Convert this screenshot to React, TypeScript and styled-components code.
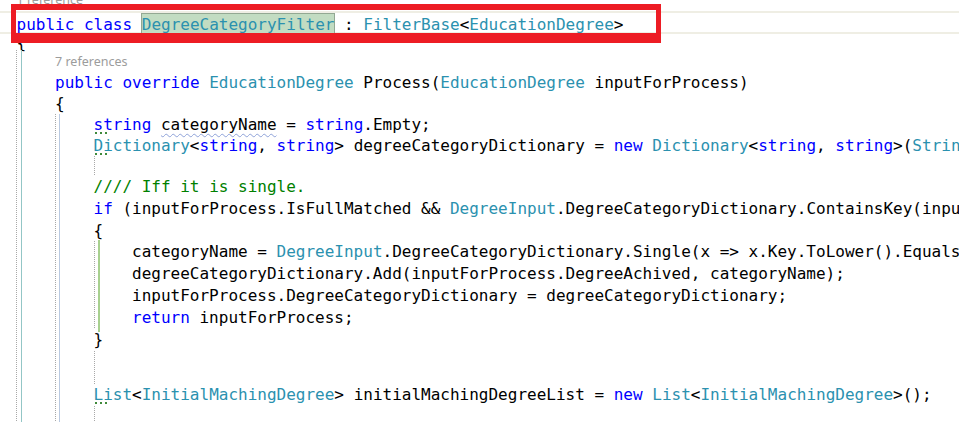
import React from 'react';
import styled, { createGlobalStyle, css } from 'styled-components';

const GlobalStyle = createGlobalStyle`
  html, body {
    margin: 0;
    padding: 0;
    background: #ffffff;
  }
  body {
    width: 959px;
    height: 422px;
    overflow: hidden;
  }
`;

const CHAR = 9.63;
const INDENT = CHAR * 4;
const GUTTER = 16.5;

type Kind = 'kw' | 'type' | 'comment' | 'plain' | 'symbol' | 'hint' | 'squiggle';
type Seg = [Kind, string];

type Line =
  | { lens: string; h: number; indent: number }
  | { segs: Seg[]; h: number; indent: number; current?: boolean };

const Editor = styled.div`
  position: relative;
  width: 959px;
  height: 422px;
  overflow: hidden;
  background: #ffffff;
`;

// editor is scrolled a little: the first code lens sits above the top edge
const Lines = styled.div`
  display: flex;
  flex-direction: column;
  margin-top: -12px;
`;

const CodeLine = styled.div<{ $h: number; $indent: number; $current?: boolean }>`
  flex-shrink: 0;
  box-sizing: border-box;
  height: ${({ $h }) => $h}px;
  line-height: ${({ $h, $current }) => ($current ? $h - 4 : $h)}px;
  padding-left: ${({ $indent }) => GUTTER + $indent * INDENT}px;
  font-family: 'DejaVu Sans Mono', 'Liberation Mono', monospace;
  font-size: 16px;
  color: #000000;
  white-space: pre;
  ${({ $current }) =>
    $current &&
    css`
      border-top: 2px solid #efeee4;
      border-bottom: 2px solid #efeee4;
    `}
`;

const LensLine = styled.div<{ $h: number; $indent: number }>`
  flex-shrink: 0;
  height: ${({ $h }) => $h}px;
  line-height: ${({ $h }) => $h}px;
  padding-left: ${({ $indent }) => GUTTER + $indent * INDENT}px;
  font-family: 'Noto Sans', 'Open Sans', sans-serif;
  font-size: 12.5px;
  color: #9c9c9c;
  white-space: pre;
`;

const colors: Record<string, string> = {
  kw: '#0000ff',
  type: '#2b91af',
  comment: '#008000',
  plain: '#000000',
};

const Tok = styled.span<{ $kind: string }>`
  color: ${({ $kind }) => colors[$kind] || '#000000'};
`;

const Symbol = styled.span`
  display: inline-block;
  line-height: 21px;
  margin: 0 -1px;
  border: 1px solid #93a893;
  background: #c2dcc2;
  color: #2b91af;
`;

const Hint = styled.span<{ $kind: string }>`
  position: relative;
  color: ${({ $kind }) => colors[$kind]};
  &::after {
    content: '';
    position: absolute;
    left: 1px;
    bottom: 0;
    width: 15px;
    height: 2px;
    background: repeating-linear-gradient(to right, #3f8a3a 0 2px, transparent 2px 5px);
  }
`;

const Squiggle = styled.span`
  text-decoration: underline wavy #8ea2d8;
  text-decoration-thickness: 1px;
  text-underline-offset: 3px;
`;

const Guide = styled.div<{ $x: number; $top: number; $height: number; $tone: 'dot' | 'teal' | 'blue' | 'green' }>`
  position: absolute;
  left: ${({ $x }) => $x}px;
  top: ${({ $top }) => $top}px;
  height: ${({ $height }) => $height}px;
  width: ${({ $tone }) => ($tone === 'green' ? 2 : 1)}px;
  pointer-events: none;
  background: ${({ $tone }) => {
    if ($tone === 'dot') return 'repeating-linear-gradient(to bottom, #a8a8a8 0 1px, transparent 1px 2px)';
    if ($tone === 'teal') return '#93c6c6';
    if ($tone === 'blue') return '#b9c9e0';
    return '#a7d08f';
  }};
`;

const RedFrame = styled.div`
  position: absolute;
  left: 11px;
  top: 4px;
  width: 650px;
  height: 39px;
  box-sizing: border-box;
  border-style: solid;
  border-color: #ed1c24;
  border-width: 6px 5px 10px 5px;
  pointer-events: none;
`;

const lines: Line[] = [
  { lens: '1 reference', h: 23, indent: 0 },
  {
    h: 23,
    indent: 0,
    current: true,
    segs: [
      ['kw', 'public'],
      ['plain', ' '],
      ['kw', 'class'],
      ['plain', ' '],
      ['symbol', 'DegreeCategoryFilter'],
      ['plain', ' : '],
      ['type', 'FilterBase'],
      ['plain', '<'],
      ['type', 'EducationDegree'],
      ['plain', '>'],
    ],
  },
  { h: 18, indent: 0, segs: [['plain', '{']] },
  { lens: '7 references', h: 20, indent: 1 },
  {
    h: 22,
    indent: 1,
    segs: [
      ['kw', 'public'],
      ['plain', ' '],
      ['kw', 'override'],
      ['plain', ' '],
      ['type', 'EducationDegree'],
      ['plain', ' Process('],
      ['type', 'EducationDegree'],
      ['plain', ' inputForProcess)'],
    ],
  },
  { h: 20, indent: 1, segs: [['plain', '{']] },
  {
    h: 21,
    indent: 2,
    segs: [
      ['hint', 'kw:string'],
      ['plain', ' '],
      ['squiggle', 'categoryName'],
      ['plain', ' = '],
      ['kw', 'string'],
      ['plain', '.Empty;'],
    ],
  },
  {
    h: 21,
    indent: 2,
    segs: [
      ['hint', 'type:Dictionary'],
      ['plain', '<'],
      ['kw', 'string'],
      ['plain', ', '],
      ['kw', 'string'],
      ['plain', '> degreeCategoryDictionary = '],
      ['kw', 'new'],
      ['plain', ' '],
      ['type', 'Dictionary'],
      ['plain', '<'],
      ['kw', 'string'],
      ['plain', ', '],
      ['kw', 'string'],
      ['plain', '>('],
      ['type', 'StringComparer'],
      ['plain', '.OrdinalIgnoreCase);'],
    ],
  },
  { h: 20, indent: 2, segs: [] },
  { h: 22, indent: 2, segs: [['comment', '//// Iff it is single.']] },
  {
    h: 22,
    indent: 2,
    segs: [
      ['kw', 'if'],
      ['plain', ' (inputForProcess.IsFullMatched && '],
      ['type', 'DegreeInput'],
      ['plain', '.DegreeCategoryDictionary.ContainsKey(inputForProcess.DegreeAchived))'],
    ],
  },
  { h: 21, indent: 2, segs: [['plain', '{']] },
  {
    h: 22,
    indent: 3,
    segs: [
      ['plain', 'categoryName = '],
      ['type', 'DegreeInput'],
      ['plain', '.DegreeCategoryDictionary.Single(x => x.Key.ToLower().Equals(inputForProcess.DegreeAchived.ToLower())).Value;'],
    ],
  },
  { h: 22, indent: 3, segs: [['plain', 'degreeCategoryDictionary.Add(inputForProcess.DegreeAchived, categoryName);']] },
  { h: 22, indent: 3, segs: [['plain', 'inputForProcess.DegreeCategoryDictionary = degreeCategoryDictionary;']] },
  {
    h: 22,
    indent: 3,
    segs: [
      ['kw', 'return'],
      ['plain', ' inputForProcess;'],
    ],
  },
  { h: 22, indent: 2, segs: [['plain', '}']] },
  { h: 33, indent: 2, segs: [] },
  {
    h: 22,
    indent: 2,
    segs: [
      ['hint', 'type:List'],
      ['plain', '<'],
      ['type', 'InitialMachingDegree'],
      ['plain', '> initialMachingDegreeList = '],
      ['kw', 'new'],
      ['plain', ' '],
      ['type', 'List'],
      ['plain', '<'],
      ['type', 'InitialMachingDegree'],
      ['plain', '>();'],
    ],
  },
  { h: 22, indent: 2, segs: [] },
];

const guides: { x: number; top: number; height: number; tone: 'dot' | 'teal' | 'blue' | 'green' }[] = [
  { x: 16, top: 50, height: 372, tone: 'dot' },
  { x: 21, top: 50, height: 372, tone: 'teal' },
  { x: 55, top: 114, height: 308, tone: 'dot' },
  { x: 59, top: 114, height: 308, tone: 'blue' },
  { x: 94, top: 156, height: 20, tone: 'dot' },
  { x: 94, top: 241, height: 88, tone: 'dot' },
  { x: 94, top: 351, height: 33, tone: 'dot' },
  { x: 94, top: 406, height: 16, tone: 'dot' },
  { x: 98, top: 240, height: 92, tone: 'green' },
];

function renderSeg([kind, text]: Seg, i: number) {
  if (kind === 'symbol') return <Symbol key={i}>{text}</Symbol>;
  if (kind === 'squiggle') return <Squiggle key={i}>{text}</Squiggle>;
  if (kind === 'hint') {
    const [k, t] = text.split(':');
    return (
      <Hint key={i} $kind={k}>
        {t}
      </Hint>
    );
  }
  return (
    <Tok key={i} $kind={kind}>
      {text}
    </Tok>
  );
}

export default function App() {
  return (
    <>
      <GlobalStyle />
      <Editor>
        <Lines>
          {lines.map((line, i) =>
            'lens' in line ? (
              <LensLine key={i} $h={line.h} $indent={line.indent}>
                {line.lens}
              </LensLine>
            ) : (
              <CodeLine key={i} $h={line.h} $indent={line.indent} $current={line.current}>
                {line.segs.map(renderSeg)}
              </CodeLine>
            )
          )}
        </Lines>
        {guides.map((g, i) => (
          <Guide key={i} $x={g.x} $top={g.top} $height={g.height} $tone={g.tone} />
        ))}
        <RedFrame />
      </Editor>
    </>
  );
}
